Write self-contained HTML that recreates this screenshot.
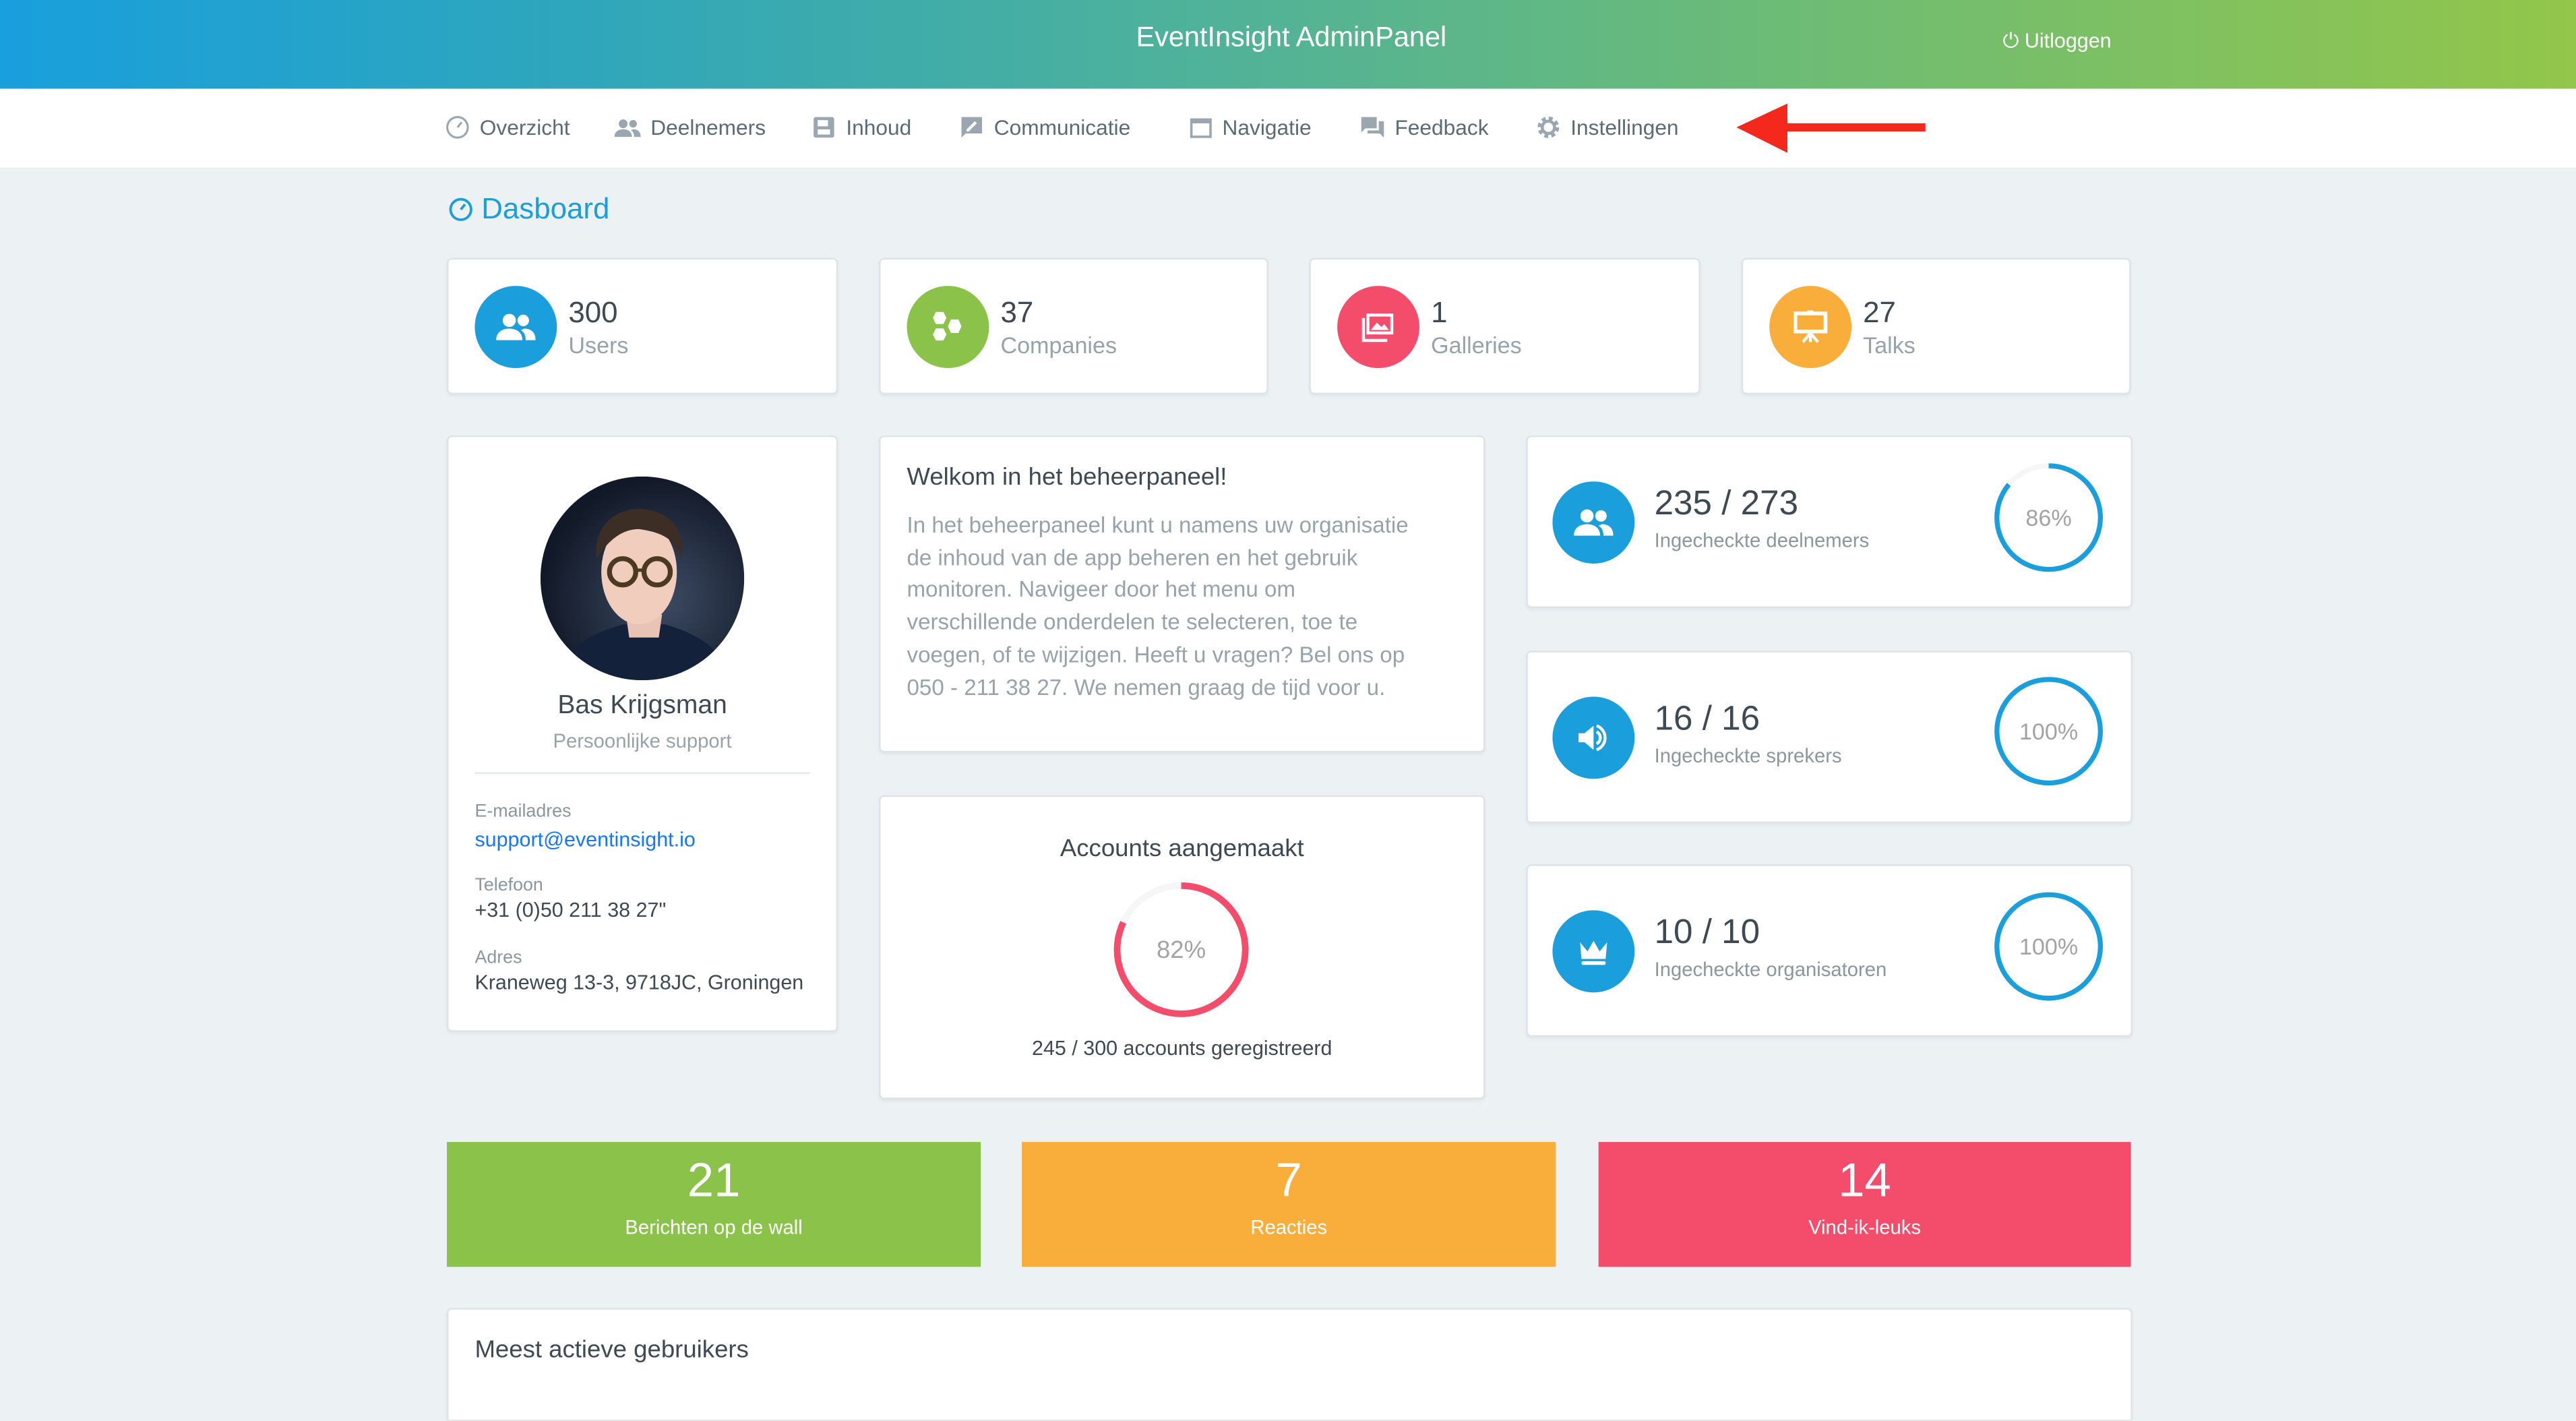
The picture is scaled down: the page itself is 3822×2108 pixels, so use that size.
<!DOCTYPE html>
<html><head><meta charset="utf-8">
<style>
*{margin:0;padding:0;box-sizing:border-box}
html,body{width:3822px;height:2108px;overflow:hidden;background:#ecf1f4}
#w{position:absolute;left:0;top:0;width:1568px;height:864.8px;overflow:hidden;transform:scale(2.4375);transform-origin:0 0;font-family:"Liberation Sans",sans-serif;color:#3d4a54;background:#ecf1f4}
.a{position:absolute}
.hdr{left:0;top:0;width:1568px;height:54px;background:linear-gradient(90deg,#199fdd 0%,#2ea6bc 22%,#4db19c 45%,#6bbb78 68%,#93c64a 100%);box-shadow:0 2px 4px rgba(0,0,0,.25)}
.nav{left:0;top:54px;width:1568px;height:48px;background:#fff}
.ni{top:70px;font-size:13px;color:#5b6b76;display:flex;align-items:center;gap:6px}
.card{background:#fff;border:1px solid #dde3e7;border-radius:3px;box-shadow:0 1px 2px rgba(0,0,0,.05)}
.ic{width:50px;height:50px;border-radius:50%;display:flex;align-items:center;justify-content:center}
.num{font-size:18px;color:#3d4a54}
.lbl{font-size:14px;color:#97a3ab}
.big{font-size:21px;color:#3d4a54}
.sm{font-size:12px;color:#8a979f}
.cb{color:#fff;text-align:center}
</style></head><body><div id="w">
<div class="a hdr"></div>
<div class="a" style="left:0;width:1572px;top:13px;text-align:center;color:#fff;font-size:17px">EventInsight AdminPanel</div>
<div class="a" style="left:1219px;top:18px;color:#fff;font-size:12.5px">&#x23FB; Uitloggen</div>
<div class="a nav"></div>
<div class="a ni" style="left:271px"><svg width="15" height="15" viewBox="0 0 24 24"><circle cx="12" cy="12" r="10" fill="none" stroke="#9aa7b0" stroke-width="2"/><path d="M12 12l4-5" stroke="#9aa7b0" stroke-width="2"/></svg>Overzicht</div>
<div class="a ni" style="left:374px"><svg width="16" height="14" viewBox="0 0 24 20"><circle cx="8" cy="6" r="4" fill="#9aa7b0"/><circle cx="17" cy="6" r="3.5" fill="#9aa7b0"/><path d="M0 18c0-5 4-7 8-7s8 2 8 7zM17 11c4 0 7 2 7 7h-6c0-3-1-5-3-6z" fill="#9aa7b0"/></svg>Deelnemers</div>
<div class="a ni" style="left:494px"><svg width="15" height="15" viewBox="0 0 24 24"><rect x="2" y="2" width="20" height="20" rx="2" fill="#9aa7b0"/><rect x="6" y="5" width="10" height="6" fill="#fff"/><rect x="6" y="14" width="12" height="5" fill="#fff"/></svg>Inhoud</div>
<div class="a ni" style="left:584px"><svg width="15" height="15" viewBox="0 0 24 24"><path d="M2 2h20v16H6l-4 4z" fill="#9aa7b0"/><path d="M7 14l8-8 2 2-8 8H7z" fill="#fff"/></svg>Communicatie</div>
<div class="a ni" style="left:724px"><svg width="14" height="14" viewBox="0 0 24 24"><rect x="2" y="3" width="20" height="18" fill="none" stroke="#9aa7b0" stroke-width="2.5"/><rect x="2" y="3" width="20" height="4" fill="#9aa7b0"/></svg>Navigatie</div>
<div class="a ni" style="left:828px"><svg width="15" height="15" viewBox="0 0 24 24"><path d="M1 2h15v11H5l-4 4z" fill="#9aa7b0"/><path d="M18 6h5v16l-4-4H7v-3h11z" fill="#9aa7b0"/></svg>Feedback</div>
<div class="a ni" style="left:935px"><svg width="15" height="15" viewBox="0 0 24 24"><circle cx="12" cy="12" r="8" fill="none" stroke="#9aa7b0" stroke-width="5" stroke-dasharray="3.5 2.8"/><circle cx="12" cy="12" r="6" fill="none" stroke="#9aa7b0" stroke-width="3"/></svg>Instellingen</div>
<svg class="a" style="left:1055px;top:62px" width="120" height="32" viewBox="0 0 120 32"><path d="M2 15.5L33 1v12h84v5H33v13z" fill="#f5281e"/></svg>

<div class="a" style="left:273px;top:117px;color:#1a9fdc;font-size:18px;display:flex;align-items:center;gap:5px"><svg width="15" height="15" viewBox="0 0 24 24"><circle cx="12" cy="12" r="10" fill="none" stroke="#1a9fdc" stroke-width="2.5"/><path d="M12 12l4-5" stroke="#1a9fdc" stroke-width="2.5"/></svg>Dasboard</div>

<div class="a card" style="left:272px;top:157px;width:238px;height:83px"></div>
<div class="a card" style="left:535px;top:157px;width:237px;height:83px"></div>
<div class="a card" style="left:797px;top:157px;width:238px;height:83px"></div>
<div class="a card" style="left:1060px;top:157px;width:237px;height:83px"></div>
<div class="a ic" style="left:289px;top:174px;background:#1a9fdc"><svg width="24" height="20" viewBox="0 0 24 20"><circle cx="8" cy="6" r="4" fill="#fff"/><circle cx="16.5" cy="6" r="3.5" fill="#fff"/><path d="M0 18c0-5 4-7 8-7s8 2 8 7zM17 11c4 0 7 2 7 7h-6c0-3-1-5-3-6z" fill="#fff"/></svg></div>
<div class="a ic" style="left:552px;top:174px;background:#8bc34a"><svg width="22" height="22" viewBox="0 0 24 24"><polygon points="4,2 9,2 11,6 9,10 4,10 2,6" fill="#fff"/><polygon points="4,13 9,13 11,17 9,21 4,21 2,17" fill="#fff"/><polygon points="14,7 19,7 21,11.5 19,16 14,16 12,11.5" fill="#fff"/></svg></div>
<div class="a ic" style="left:814px;top:174px;background:#f44c6b"><svg width="22" height="20" viewBox="0 0 24 22"><rect x="4" y="2" width="18" height="14" fill="#fff"/><rect x="6" y="4" width="14" height="10" fill="#f44c6b"/><path d="M7 13l4-5 3 3 2-2 3 4z" fill="#fff"/><path d="M2 5v15h16" fill="none" stroke="#fff" stroke-width="2"/></svg></div>
<div class="a ic" style="left:1077px;top:174px;background:#f9ad3a"><svg width="22" height="22" viewBox="0 0 24 24"><rect x="2" y="3" width="20" height="12" fill="none" stroke="#fff" stroke-width="2.5"/><path d="M12 15v7M12 16l-5 6M12 16l5 6" stroke="#fff" stroke-width="2"/><rect x="10" y="1" width="4" height="3" fill="#fff"/></svg></div>
<div class="a num" style="left:346px;top:180px">300</div><div class="a lbl" style="left:346px;top:202px">Users</div>
<div class="a num" style="left:609px;top:180px">37</div><div class="a lbl" style="left:609px;top:202px">Companies</div>
<div class="a num" style="left:871px;top:180px">1</div><div class="a lbl" style="left:871px;top:202px">Galleries</div>
<div class="a num" style="left:1134px;top:180px">27</div><div class="a lbl" style="left:1134px;top:202px">Talks</div>

<div class="a card" style="left:272px;top:265px;width:238px;height:363px"></div>
<svg class="a" style="left:329px;top:290px" width="124" height="124" viewBox="0 0 124 124"><defs><clipPath id="c"><circle cx="62" cy="62" r="62"/></clipPath><radialGradient id="g" cx="0.6" cy="0.6" r="0.6"><stop offset="0" stop-color="#3d4b63"/><stop offset="1" stop-color="#111827"/></radialGradient></defs><g clip-path="url(#c)"><rect width="124" height="124" fill="url(#g)"/><path d="M10 124c4-20 20-28 40-34h26c20 6 34 14 40 34z" fill="#14213a"/><path d="M52 84h22l-2 14H54z" fill="#e9c3b3"/><ellipse cx="60" cy="58" rx="23" ry="32" fill="#f0cdbd"/><path d="M34 50c-2-22 14-32 30-30 16 2 24 14 22 30-4-12-12-16-26-18-10 0-18 6-26 18z" fill="#3d2e25"/><circle cx="50" cy="58" r="8" fill="none" stroke="#4a3a22" stroke-width="3"/><circle cx="71" cy="58" r="8" fill="none" stroke="#4a3a22" stroke-width="3"/><path d="M58 57h5" stroke="#4a3a22" stroke-width="2"/></g></svg>
<div class="a" style="left:272px;width:238px;top:421px;text-align:center;font-size:16px;color:#3d4a54">Bas Krijgsman</div>
<div class="a" style="left:272px;width:238px;top:444px;text-align:center;font-size:12px;color:#97a3ab">Persoonlijke support</div>
<div class="a" style="left:289px;top:470px;width:204px;height:1px;background:#e3e8eb"></div>
<div class="a sm" style="left:289px;top:488px;font-size:11px">E-mailadres</div>
<div class="a" style="left:289px;top:504px;font-size:12.5px;color:#1877f2">support@eventinsight.io</div>
<div class="a sm" style="left:289px;top:533px;font-size:11px">Telefoon</div>
<div class="a" style="left:289px;top:547px;font-size:12.5px;color:#3d4a54">+31 (0)50 211 38 27"</div>
<div class="a sm" style="left:289px;top:577px;font-size:11px">Adres</div>
<div class="a" style="left:289px;top:591px;font-size:12.5px;color:#3d4a54">Kraneweg 13-3, 9718JC, Groningen</div>

<div class="a card" style="left:535px;top:265px;width:369px;height:193px"></div>
<div class="a" style="left:552px;top:282px;font-size:15px;color:#3d4a54">Welkom in het beheerpaneel!</div>
<div class="a" style="left:552px;top:310px;white-space:nowrap;font-size:13.6px;line-height:19.7px;color:#97a3ab">In het beheerpaneel kunt u namens uw organisatie<br>de inhoud van de app beheren en het gebruik<br>monitoren. Navigeer door het menu om<br>verschillende onderdelen te selecteren, toe te<br>voegen, of te wijzigen. Heeft u vragen? Bel ons op<br>050 - 211 38 27. We nemen graag de tijd voor u.</div>

<div class="a card" style="left:535px;top:484px;width:369px;height:185px"></div>
<div class="a" style="left:535px;width:369px;top:508px;text-align:center;font-size:15px;color:#3d4a54">Accounts aangemaakt</div>
<svg class="a" style="left:677px;top:536px" width="84" height="84" viewBox="0 0 84 84"><circle cx="42" cy="42" r="39" fill="none" stroke="#f6f6f6" stroke-width="4"/><circle cx="42" cy="42" r="39" fill="none" stroke="#f44c6b" stroke-width="4" stroke-dasharray="200.9 245" transform="rotate(-90 42 42)"/><text x="42" y="47" text-anchor="middle" font-size="15" fill="#a3a3a3" font-family="Liberation Sans">82%</text></svg>
<div class="a" style="left:535px;width:369px;top:631px;text-align:center;font-size:12.5px;color:#3d4a54">245 / 300 accounts geregistreerd</div>

<div class="a card" style="left:929px;top:265px;width:369px;height:105px"></div>
<div class="a card" style="left:929px;top:396px;width:369px;height:105px"></div>
<div class="a card" style="left:929px;top:526px;width:369px;height:105px"></div>
<div class="a ic" style="left:945px;top:293px;background:#1a9fdc"><svg width="24" height="20" viewBox="0 0 24 20"><circle cx="8" cy="6" r="4" fill="#fff"/><circle cx="16.5" cy="6" r="3.5" fill="#fff"/><path d="M0 18c0-5 4-7 8-7s8 2 8 7zM17 11c4 0 7 2 7 7h-6c0-3-1-5-3-6z" fill="#fff"/></svg></div>
<div class="a ic" style="left:945px;top:424px;background:#1a9fdc"><svg width="22" height="22" viewBox="0 0 24 24"><path d="M2 9h4l6-5v16l-6-5H2z" fill="#fff"/><path d="M14 8a4.5 4.5 0 0 1 0 8" fill="none" stroke="#fff" stroke-width="2"/><path d="M14 4a8.5 8.5 0 0 1 0 16" fill="none" stroke="#fff" stroke-width="2"/></svg></div>
<div class="a ic" style="left:945px;top:554px;background:#1a9fdc"><svg width="22" height="22" viewBox="0 0 24 24"><path d="M3 6l5 6 4-7 4 7 5-6-1 11H4z" fill="#fff"/><rect x="4" y="18.5" width="16" height="2.5" rx="1" fill="#fff"/></svg></div>
<div class="a big" style="left:1007px;top:295px">235 / 273</div><div class="a sm" style="left:1007px;top:322px">Ingecheckte deelnemers</div>
<div class="a big" style="left:1007px;top:426px">16 / 16</div><div class="a sm" style="left:1007px;top:453px">Ingecheckte sprekers</div>
<div class="a big" style="left:1007px;top:556px">10 / 10</div><div class="a sm" style="left:1007px;top:583px">Ingecheckte organisatoren</div>
<svg class="a" style="left:1213px;top:281px" width="68" height="68" viewBox="0 0 68 68"><circle cx="34" cy="34" r="31.5" fill="none" stroke="#f6f6f6" stroke-width="3"/><circle cx="34" cy="34" r="31.5" fill="none" stroke="#1a9fdc" stroke-width="3" stroke-dasharray="170.2 200" transform="rotate(-90 34 34)"/><text x="34" y="39" text-anchor="middle" font-size="14" fill="#a3a3a3" font-family="Liberation Sans">86%</text></svg>
<svg class="a" style="left:1213px;top:411px" width="68" height="68" viewBox="0 0 68 68"><circle cx="34" cy="34" r="31.5" fill="none" stroke="#1a9fdc" stroke-width="3"/><text x="34" y="39" text-anchor="middle" font-size="14" fill="#a3a3a3" font-family="Liberation Sans">100%</text></svg>
<svg class="a" style="left:1213px;top:542px" width="68" height="68" viewBox="0 0 68 68"><circle cx="34" cy="34" r="31.5" fill="none" stroke="#1a9fdc" stroke-width="3"/><text x="34" y="39" text-anchor="middle" font-size="14" fill="#a3a3a3" font-family="Liberation Sans">100%</text></svg>

<div class="a cb" style="left:272px;top:695px;width:325px;height:76px;background:#8bc34a"><div style="font-size:29px;margin-top:8px">21</div><div style="font-size:12px;margin-top:4px">Berichten op de wall</div></div>
<div class="a cb" style="left:622px;top:695px;width:325px;height:76px;background:#f9ad3a"><div style="font-size:29px;margin-top:8px">7</div><div style="font-size:12px;margin-top:4px">Reacties</div></div>
<div class="a cb" style="left:973px;top:695px;width:324px;height:76px;background:#f44c6b"><div style="font-size:29px;margin-top:8px">14</div><div style="font-size:12px;margin-top:4px">Vind-ik-leuks</div></div>

<div class="a card" style="left:272px;top:796px;width:1026px;height:68px;border-bottom:none;border-radius:3px 3px 0 0"></div>
<div class="a" style="left:289px;top:813px;font-size:15px;color:#3d4a54">Meest actieve gebruikers</div>
</div></body></html>
